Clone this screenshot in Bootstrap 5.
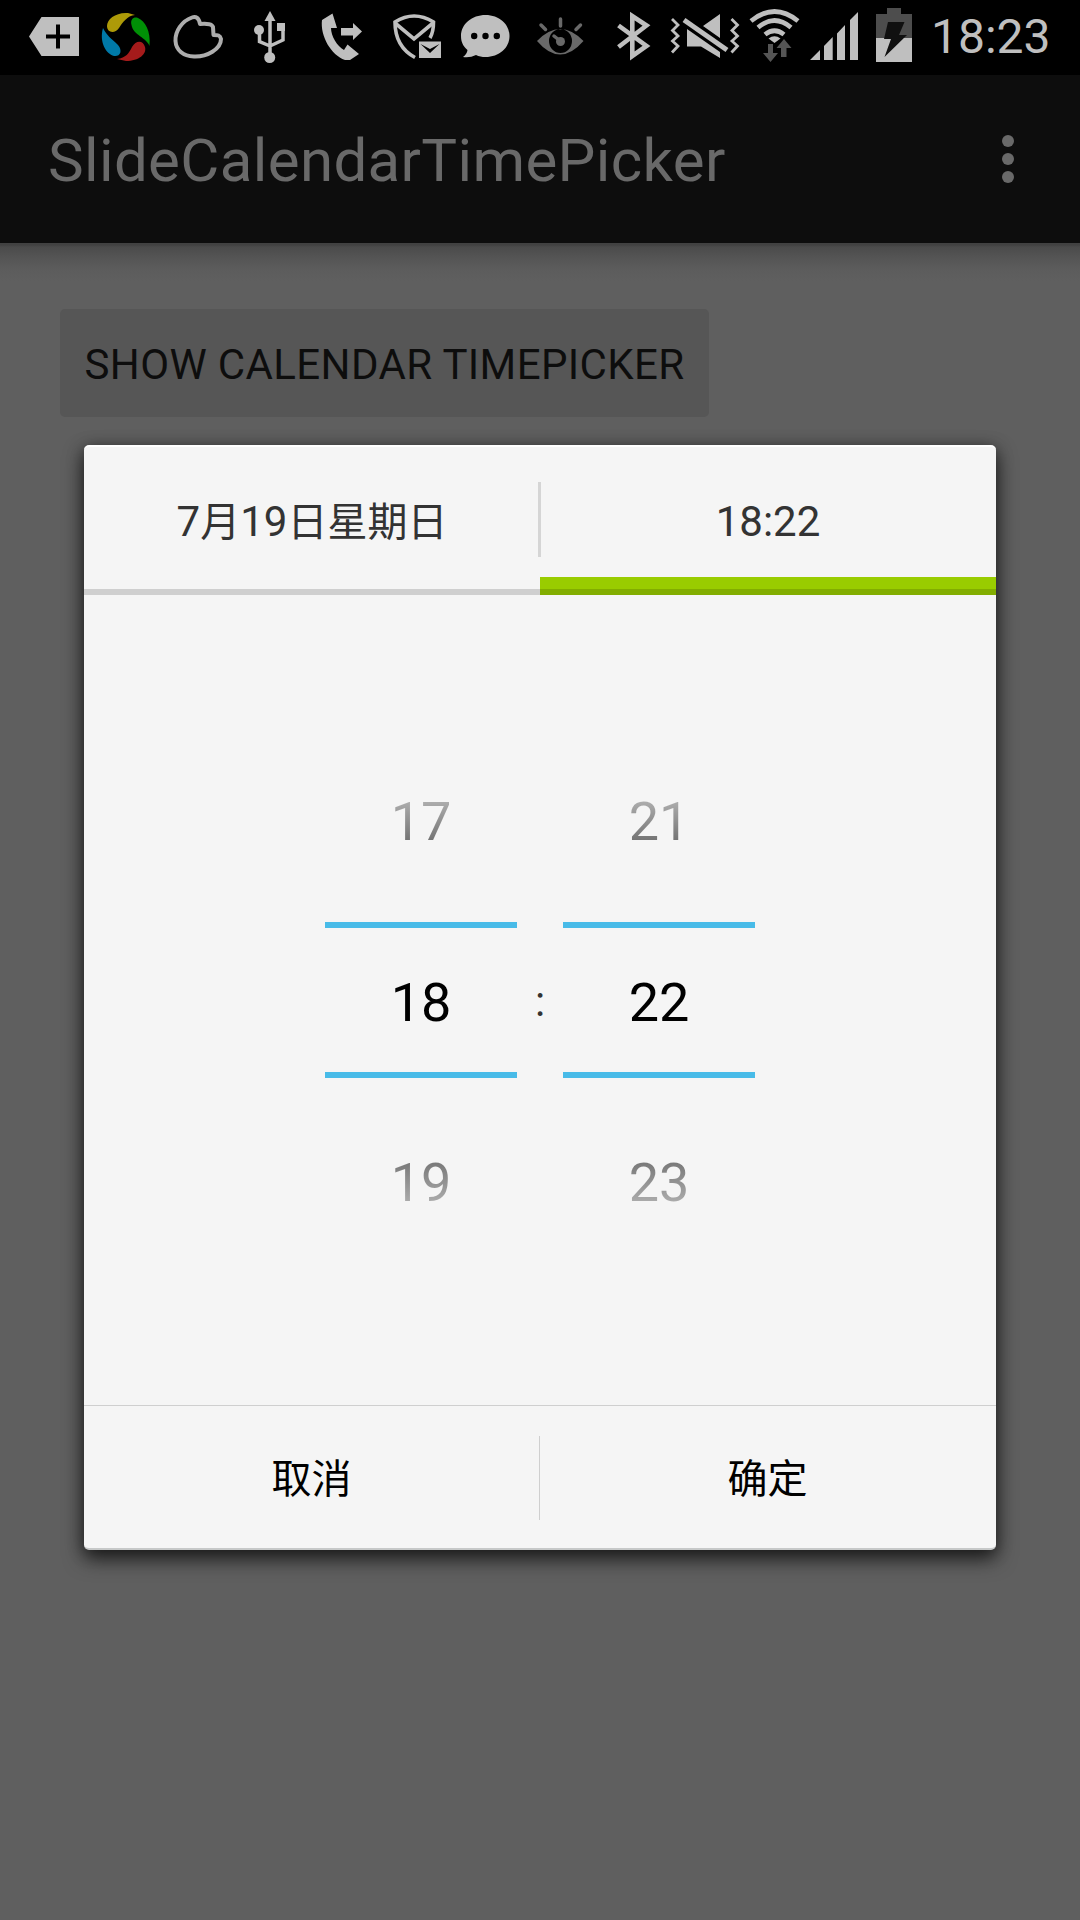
<!DOCTYPE html>
<html lang="zh">
<head>
<meta charset="utf-8">
<meta name="viewport" content="width=device-width, initial-scale=1">
<title>SlideCalendarTimePicker</title>
<link href="https://cdn.jsdelivr.net/npm/bootstrap@5.3.0/dist/css/bootstrap.min.css" rel="stylesheet">
<style>
body{width:1080px;height:1920px;background:#5f5f5f;font-family:Roboto,"Noto Sans CJK SC",sans-serif;font-size:42px;line-height:1;overflow:hidden}
.statusbar{height:75px;background:#000;color:#bfbfbf}
.statusbar svg{flex:none;height:75px;fill:#bfbfbf}
.clock{font-size:48px;line-height:56px;padding:9px 0 0 11px}
.appbar{height:168px;background:#0d0d0d;color:#696969;padding:3px 60px 0 48px}
.appbar h1{font-size:60px;line-height:70px;letter-spacing:.37px}
.dots svg{fill:#696969;margin-top:-2px}
.content{height:1677px;padding:66px 60px;background:linear-gradient(#414141 0,#414141 2px,#4b4b4b 4px,#545454 14px,#5c5c5c 26px,#5f5f5f 38px)}
.showbtn{width:649px;height:108px;border:0;border-radius:5px;background:#565656;color:#0d0d0d;font-size:42px;line-height:50px;letter-spacing:.37px;padding:3px 0 0;white-space:nowrap}
.dialog{left:84px;top:445px;width:912px;height:1105px;background:#f5f5f5;border-radius:5px;border-top:2px solid #fff;border-bottom:2px solid #c6c8c8;box-shadow:0 9px 20px rgba(0,0,0,.65),0 2px 16px rgba(0,0,0,.35)}
.tabs{height:148px;color:#333}
.tab-item{width:456px;height:148px;padding-top:50px;line-height:50px;border-bottom:6px solid #cfcfcf}
.tab-item.on{border-bottom-color:#82ad00;box-shadow:inset 0 -12px #99cc00}
.tab-rule{left:454px;top:35px;width:3px;height:75px;background:#d5d5d5}
.han{font-size:40px}
.pick{height:810px;color:#333}
.wheel{width:192px;color:#000;font-size:54px;line-height:64px;margin-top:5px}
.above,.below{height:64px;color:transparent;-webkit-background-clip:text;background-clip:text}
.above{background-image:linear-gradient(#b4b4b4 0,#acacac 12px,#727272 52px,#6c6c6c)}
.below{background-image:linear-gradient(#747474 0,#7a7a7a 12px,#acacac 52px,#b4b4b4)}
.now{height:156px;border-top:6px solid #48bbe8;border-bottom:6px solid #48bbe8;margin:68px 0 73px;padding-top:43px}
.colon{width:46px;line-height:50px;padding-top:4px}
.foot{height:143px;border-top:1px solid #cfcfcf}
.foot button{color:#000;font-size:40px;line-height:58px;border:0;background:none;width:455px;padding:6px 0 0}
.foot-rule{width:1px;height:84px;background:#cfcfcf;margin-top:1px}
</style>
</head>
<body>
<header class="statusbar d-flex">
  <svg width="90" viewBox="0 0 90 75"><path fill-rule="evenodd" d="M29 36.500 41.500 17H79V56H41.500ZM56 24.500V34.500H46V38.500H56V48.500H60V38.500H70V34.500H60V24.500Z"/></svg>
  <svg width="72" viewBox="90 0 72 75"><path fill="#ad9a08" d="M107 26C107 19 116 12 128 13L135 15C127 16 123 22 119 28C115 34 107 33 107 26Z"/><path fill="#009006" d="M131.500 25C130 19 134 16.500 138 18C145 21 151 31 149.500 46C147 38 133 35 131.500 25Z"/><path fill="#a51b1b" d="M145 47C147 54 139 61 126 61L117 59C126 58 129 53 132 47C136 40 143 40 145 47Z"/><path fill="#0079a8" d="M103 28C107 36 111 38 118 45C123 51 120 57 114 56C106 54 99 42 103 28Z"/></svg>
  <svg width="73" viewBox="162 0 73 75"><path fill="none" stroke="#adadad" stroke-width="4" stroke-linejoin="round" d="M200 24C199 18 196 16 192 17.500C182 21 175 31 175.500 41C176 50 183 56 194 56.500C207 57 221 49 221 39C220 35 218 35 213.500 35L213 27C212 24 208 23.500 200 24Z"/></svg>
  <svg width="70" viewBox="235 0 70 75"><path d="M270 11 275.500 21H264.500Z"/><circle cx="259" cy="30" r="5"/><path d="M277 23H285V31H277Z"/><circle cx="269.700" cy="57.500" r="5.500"/><path fill="none" stroke="#bfbfbf" stroke-width="3.500" d="M270 19V56M259.500 31V41.500L270 46M283 29V40L270 46"/></svg>
  <svg width="75" viewBox="305 0 75 75"><path d="M322 20 332.500 13.500 337 28H331C331 36 337 46 344 50L347.500 44.500 359 54 350 60H345C331 55 320 36 322 20ZM341 28H353V23L362 31.500 353 40V35.500H341Z"/></svg>
  <svg width="70" viewBox="380 0 70 75"><g fill="none" stroke="#bfbfbf" stroke-width="3.600"><path d="M415 57.500C403 51 395 40 395 22Q414 10 433.500 22Q433.500 32 430 38"/><path d="M395 23 414 39 433 23"/></g><path fill-rule="evenodd" d="M419 41.500H441V58H419ZM420.500 44 430 53 439.500 44 430 49Z"/></svg>
  <svg width="70" viewBox="450 0 70 75"><path fill-rule="evenodd" d="M485.500 15C499 15 509.500 24 509.500 36C509.500 48 499 57 485.500 57C482 57 479 56.500 476 55Q470 58 463 57Q467 54 467.500 50C463 46 461 42 461 36C461 24 472 15 485.500 15ZM471 36a3.200 3.200 0 1 0 6.400 0a3.200 3.200 0 1 0-6.400 0M482.300 36a3.200 3.200 0 1 0 6.400 0a3.200 3.200 0 1 0-6.400 0M493.600 36a3.200 3.200 0 1 0 6.400 0a3.200 3.200 0 1 0-6.400 0"/></svg>
  <svg width="80" viewBox="520 0 80 75"><path fill="#696969" fill-rule="evenodd" d="M537 41Q560 17 583.500 41Q560 68 537 41ZM549 41a11.500 12 0 1 0 23 0a11.500 12 0 1 0-23 0"/><circle cx="560.500" cy="41.500" r="4.500" fill="#696969"/><path fill="none" stroke="#696969" stroke-width="3.500" stroke-linecap="round" d="M560.500 19V26M541 25 545.500 29.500M580.500 25 576 29.500M554 36 559 40"/></svg>
  <svg width="60" viewBox="600 0 60 75"><path fill="none" stroke="#bfbfbf" stroke-width="4.600" d="M618.500 25.500 646.500 46 632.300 56V16L646.500 25.500 618.500 47"/></svg>
  <svg width="85" viewBox="660 0 85 75"><path fill="none" stroke="#bfbfbf" stroke-width="2.800" d="M672 19 678 25 672.500 30.500 678 36 672.500 41 678 46 672 52.500M731.500 19 737.500 25 732 30.500 737.500 36 732 41 737.500 46 731.500 52.500"/><path d="M720 14V38L703 26ZM687 29 720 52V58L701 46.500H687Z"/><path fill="none" stroke="#bfbfbf" stroke-width="5" d="M684 20 727 50"/></svg>
  <svg width="60" viewBox="745 0 60 75"><g fill="none" stroke="#bfbfbf" stroke-width="4.700"><path d="M751 21Q774.500 2 798 21M758 27.500Q774.500 13.500 791 27.500M765 34.500Q774.500 27 784 34.500"/></g><path d="M768.500 38.500Q774.500 34 780.500 38.500L774.500 43Z"/><path fill="#555" d="M768 44H773V53H778L770.500 62 763 53H768ZM784 39 791.500 48H786.500V57H781V48H776.500Z"/></svg>
  <svg width="60" viewBox="805 0 60 75"><path d="M810 60 820 50V60ZM824 60V46L832.700 37V60ZM837 60V33.500L845 25V60ZM850 60V20L858 12V60Z"/></svg>
  <svg width="55" viewBox="865 0 55 75"><path fill="#4d4d4d" d="M876 14H887V8H901V14H912V38H876Z"/><path d="M876 38H912V62H876Z"/><path fill="#101010" d="M888 22H904.500L899 35H907L884.500 57 891 39H884Z"/></svg>
  <span class="clock">18:23</span>
</header>
<nav class="appbar d-flex align-items-center justify-content-between">
  <h1 class="m-0 fw-normal">SlideCalendarTimePicker</h1>
  <span class="dots d-flex"><svg width="24" height="50" viewBox="0 0 24 50"><circle cx="12" cy="6" r="6"/><circle cx="12" cy="24" r="6"/><circle cx="12" cy="42" r="6"/></svg></span>
</nav>
<main class="content">
  <button class="showbtn d-block">SHOW CALENDAR TIMEPICKER</button>
</main>
<section class="dialog position-absolute overflow-hidden" role="dialog">
  <div class="tabs d-flex text-center position-relative">
    <div class="tab-item">7<span class="han">月</span>19<span class="han">日星期日</span></div>
    <div class="tab-item on">18:22</div>
    <i class="tab-rule position-absolute"></i>
  </div>
  <div class="pick d-flex justify-content-center align-items-center text-center">
    <div class="wheel"><div class="above">17</div><div class="now">18</div><div class="below">19</div></div>
    <div class="colon">:</div>
    <div class="wheel"><div class="above">21</div><div class="now">22</div><div class="below">23</div></div>
  </div>
  <div class="foot d-flex align-items-center">
    <button>取消</button><i class="foot-rule"></i><button>确定</button>
  </div>
</section>
<script src="https://cdn.jsdelivr.net/npm/bootstrap@5.3.0/dist/js/bootstrap.bundle.min.js"></script>
</body>
</html>
